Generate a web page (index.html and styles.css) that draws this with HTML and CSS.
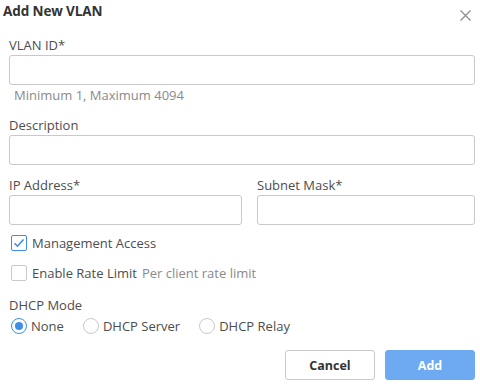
FILE: index.html
```html
<!DOCTYPE html>
<html>
<head>
<meta charset="utf-8">
<link rel="stylesheet" href="styles.css">
</head>
<body>
<div class="dialog">
  <div class="header">
    <span class="title">Add New VLAN</span>
    <svg class="close" width="11" height="11" viewBox="0 0 11 11"><path d="M0.5 0.5 L10.5 10.5 M10.5 0.5 L0.5 10.5" stroke="#8c8c8c" stroke-width="1.2" fill="none"/></svg>
  </div>
  <div class="form">
    <div class="field">
      <label class="label">VLAN ID*</label>
      <div class="input"></div>
      <div class="help">Minimum 1, Maximum 4094</div>
    </div>
    <div class="field">
      <label class="label">Description</label>
      <div class="input"></div>
    </div>
    <div class="field row">
      <div class="col">
        <label class="label">IP Address*</label>
        <div class="input"></div>
      </div>
      <div class="col">
        <label class="label">Subnet Mask*</label>
        <div class="input"></div>
      </div>
    </div>
    <div class="check-row first">
      <span class="checkbox checked"><svg width="12" height="10" viewBox="0 0 12 10"><path d="M1.5 5.2 L4.5 8.2 L10.5 1.5" stroke="#3d8ee6" stroke-width="1.6" fill="none"/></svg></span>
      <span class="check-text">Management Access</span>
    </div>
    <div class="check-row">
      <span class="checkbox"></span>
      <span class="check-text">Enable Rate Limit</span>
      <span class="muted">Per client rate limit</span>
    </div>
    <div class="dhcp">
      <div class="label">DHCP Mode</div>
      <div class="radios">
        <span class="radio-item"><span class="radio checked"></span>None</span>
        <span class="radio-item"><span class="radio"></span>DHCP Server</span>
        <span class="radio-item"><span class="radio"></span>DHCP Relay</span>
      </div>
    </div>
    <div class="footer">
      <button class="btn cancel">Cancel</button>
      <button class="btn add">Add</button>
    </div>
  </div>
</div>
</body>
</html>
```
FILE: styles.css
```css
html, body {
  margin: 0;
  padding: 0;
  background: #fff;
}
body {
  font-family: "Open Sans", "Liberation Sans", sans-serif;
  font-size: 13px;
  color: #4d4d4d;
  width: 480px;
  height: 388px;
  overflow: hidden;
}
.header {
  display: flex;
  justify-content: space-between;
  align-items: center;
  height: 22px;
  padding: 0 9px 0 3px;
}
.title {
  font-weight: bold;
  font-size: 13.5px;
  color: #333;
  letter-spacing: -0.1px;
}
.close {
  display: block;
  margin-top: 8px;
}
.form {
  padding: 13px 5px 0 9px;
}
.field {
  margin-bottom: 10px;
}
.label {
  display: block;
  line-height: 20px;
  color: #4d4d4d;
}
.input {
  height: 28px;
  border: 1px solid #c9c9c9;
  border-radius: 3px;
}
.help {
  line-height: 20px;
  color: #8a8a8a;
  padding-left: 5px;
}
.row {
  display: grid;
  grid-template-columns: 233fr 218fr;
  column-gap: 15px;
}
.check-row {
  display: flex;
  align-items: center;
  height: 16px;
  padding-left: 2px;
  margin-top: 14px;
}
.check-row.first {
  margin-top: 3px;
}
.checkbox {
  box-sizing: border-box;
  width: 16px;
  height: 16px;
  border: 1px solid #c9c9c9;
  border-radius: 2px;
  margin-right: 5px;
  display: flex;
  align-items: center;
  justify-content: center;
}
.checkbox.checked {
  border-color: #3d8ee6;
}
.muted {
  color: #8a8a8a;
  margin-left: 5px;
}
.dhcp {
  margin-top: 14px;
}
.radios {
  display: flex;
  align-items: center;
  height: 16px;
  padding-left: 2px;
  margin-top: 3px;
}
.radio-item {
  display: flex;
  align-items: center;
  margin-right: 19px;
}
.radio {
  box-sizing: border-box;
  width: 16px;
  height: 16px;
  border: 1px solid #c9c9c9;
  border-radius: 50%;
  margin-right: 4px;
  position: relative;
}
.radio.checked {
  border-color: #3d8ee6;
}
.radio.checked::after {
  content: "";
  position: absolute;
  left: 3px;
  top: 3px;
  width: 8px;
  height: 8px;
  border-radius: 50%;
  background: #3d8ee6;
}
.footer {
  display: flex;
  justify-content: flex-end;
  gap: 10px;
  margin-top: 16px;
}
.btn {
  box-sizing: border-box;
  width: 90px;
  height: 30px;
  border-radius: 3px;
  font-family: "Open Sans", "Liberation Sans", sans-serif;
  font-weight: bold;
  font-size: 12.5px;
  padding: 0;
}
.cancel {
  background: #fff;
  border: 1px solid #c9c9c9;
  color: #333;
}
.add {
  background: #6eaaf2;
  border: 1px solid #6eaaf2;
  color: #fff;
}
```
